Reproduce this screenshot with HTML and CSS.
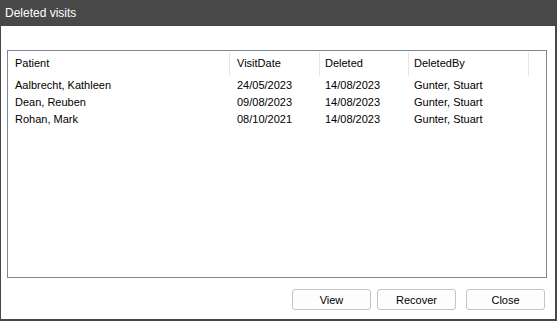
FILE: index.html
```html
<!DOCTYPE html>
<html lang="en">
<head>
    <meta charset="UTF-8">
    <title>Deleted visits</title>
    <link rel="stylesheet" href="styles.css">
</head>
<body>
    <div class="window">
        <div class="titlebar">Deleted visits</div>
        <div class="content">
            <div class="listview">
                <div class="row header">
                    <div class="cell">Patient</div>
                    <div class="cell">VisitDate</div>
                    <div class="cell">Deleted</div>
                    <div class="cell">DeletedBy</div>
                </div>
                <div class="row">
                    <div class="cell">Aalbrecht, Kathleen</div>
                    <div class="cell">24/05/2023</div>
                    <div class="cell">14/08/2023</div>
                    <div class="cell">Gunter, Stuart</div>
                </div>
                <div class="row">
                    <div class="cell">Dean, Reuben</div>
                    <div class="cell">09/08/2023</div>
                    <div class="cell">14/08/2023</div>
                    <div class="cell">Gunter, Stuart</div>
                </div>
                <div class="row">
                    <div class="cell">Rohan, Mark</div>
                    <div class="cell">08/10/2021</div>
                    <div class="cell">14/08/2023</div>
                    <div class="cell">Gunter, Stuart</div>
                </div>
            </div>
            <div class="buttons">
                <button class="btn">View</button>
                <button class="btn">Recover</button>
                <button class="btn btn-close">Close</button>
            </div>
        </div>
    </div>
</body>
</html>
```

FILE: styles.css
```css
body {
    margin: 0;
    font-family: 'Liberation Sans', Arial, sans-serif;
    font-size: 11px;
    color: #000;
}
.window {
    width: 557px;
    height: 321px;
    box-sizing: border-box;
    border: 1px solid #484848;
    border-top: none;
    border-right-width: 2px;
    border-bottom-width: 2px;
    background: #fff;
    display: flex;
    flex-direction: column;
}
.titlebar {
    height: 26px;
    background: #484848;
    color: #fff;
    font-size: 12px;
    line-height: 27px;
    padding-left: 5px;
    margin: 0 -2px 0 -1px;
}
.content {
    padding: 24px 0 0 6px;
}
.listview {
    width: 540px;
    height: 228px;
    box-sizing: border-box;
    border: 1px solid #82878f;
}
.row {
    display: grid;
    grid-template-columns: 222px 90px 89px 120px;
    height: 17px;
    line-height: 17px;
}
.row .cell {
    padding-left: 7px;
    white-space: nowrap;
}
.row .cell:nth-child(3),
.row .cell:nth-child(4) {
    padding-left: 5px;
}
.header {
    height: 24px;
    line-height: 22px;
    margin-top: 1px;
    margin-bottom: 1px;
}
.header .cell {
    box-sizing: border-box;
    border-right: 1px solid #e5e5e5;
}
.buttons {
    display: flex;
    justify-content: flex-end;
    gap: 6px;
    padding: 11px 10px 0 0;
}
.btn {
    width: 79px;
    height: 21px;
    box-sizing: border-box;
    border: 1px solid #c4c4c4;
    border-radius: 3px;
    background: #fdfdfd;
    font-family: inherit;
    font-size: 11px;
    color: #000;
    padding: 0;
}
.btn-close {
    margin-left: 4px;
}
```
